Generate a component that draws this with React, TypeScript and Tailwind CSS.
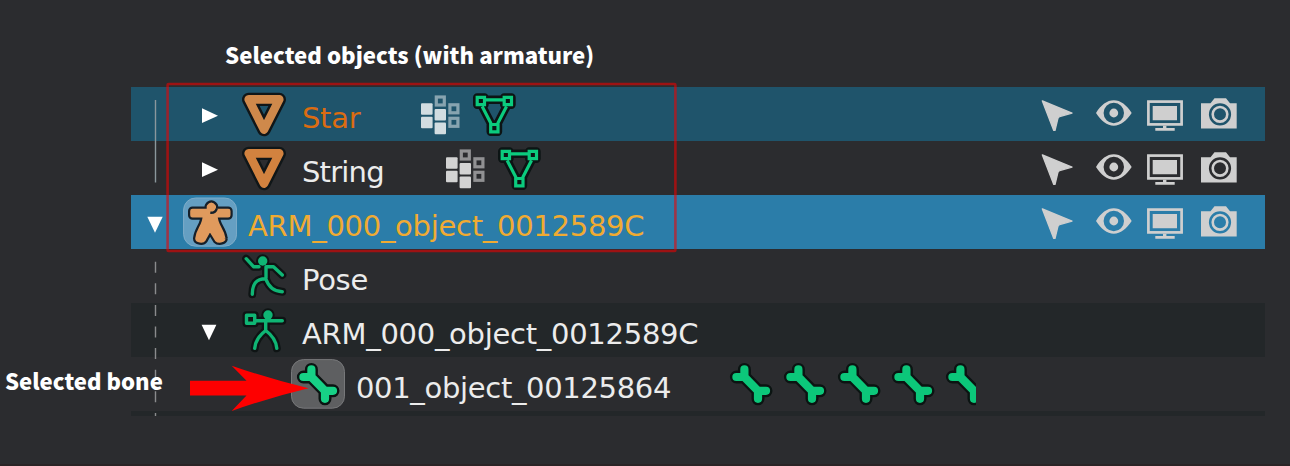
import type { ReactNode } from "react";

function Slot({ children, w = 54 }: { children?: ReactNode; w?: number }) {
  return (
    <svg className="block shrink-0" width={w} height={54} viewBox={`0 0 ${w} 54`} fill="none">
      {children}
    </svg>
  );
}

const ArrowRight = () => (
  <Slot><path d="M19 21.3 35 28.7 19 36z" fill="#fff" /></Slot>
);

const MeshIcon = ({ color }: { color: string }) => (
  <Slot>
    <path d="M11.7 12.4H42.3L27 42.6z" stroke="#101618" strokeWidth="13.4" strokeLinejoin="round" />
    <path d="M11.7 12.4H42.3L27 42.6z" stroke={color} strokeWidth="8.6" strokeLinejoin="round" />
  </Slot>
);

const GroupIcon = ({ solid, faint }: { solid: string; faint: string }) => (
  <Slot>
    <g fill={solid}>
      <rect x="8" y="16.2" width="11.6" height="11.6" rx="1" />
      <rect x="8" y="29.7" width="11.6" height="11.6" rx="1" />
      <rect x="21.6" y="22" width="11.4" height="11.6" rx="1" />
      <rect x="21.6" y="35.6" width="11.4" height="11.6" rx="1" />
    </g>
    <g stroke={faint} strokeWidth="3.2">
      <rect x="23.3" y="10" width="8" height="8" />
      <rect x="36.9" y="17.8" width="8" height="8" />
      <rect x="36.9" y="31.3" width="8" height="8" />
    </g>
  </Slot>
);

const dataShape = "M19 12.8H36M15.2 19.5 24 36.5M39.5 19.5 30.7 36.5M10.2 10.4h7.3v7.3h-7.3zM37.2 10.4h7.3v7.3h-7.3zM23.7 37.5h7.3v7.3h-7.3z";
const MeshDataIcon = () => (
  <Slot>
    <path d={dataShape} stroke="#0c1414" strokeWidth="8.4" strokeLinejoin="round" />
    <path d={dataShape} stroke="#0bcb7e" strokeWidth="3.2" />
  </Slot>
);

const personShape = "M9.5 16V20.2H22C22 31 15.5 34 14.5 43.5 14.5 45.5 19.5 46 20.5 44.5L26.9 33 34 44.5C35.5 46 40.5 45.5 40.2 43.5 39 34 32.3 31 32.3 20.2H45.2V16H30.7V11.5Q28.3 8.2 26 11.5V16z";
const PersonIcon = () => (
  <Slot>
    <rect x=".6" y="3" width="53" height="48.2" rx="12" fill="#659fc2" stroke="#7fadc9" />
    <path d={personShape} stroke="#16202a" strokeWidth="9" strokeLinejoin="round" />
    <path d={personShape} fill="#e09a5d" stroke="#e09a5d" strokeWidth="4.6" strokeLinejoin="round" />
    <path d="M33.8 13.5C33 16.6 30.5 18 27.3 17.8" stroke="#16202a" strokeWidth="2.4" />
  </Slot>
);

const Figure = ({ d, cx }: { d: string; cx: number }) => (
  <Slot>
    <g stroke="#0e1414" strokeWidth="8" strokeLinecap="round" strokeLinejoin="round">
      <path d={d} /><circle cx={cx} cy="12" r="2.7" />
    </g>
    <path d={d} stroke="#0fb574" strokeWidth="3.4" strokeLinecap="round" strokeLinejoin="round" />
    <circle cx={cx} cy="12" r="4.7" fill="#0fb574" />
  </Slot>
);

const boneShape = "M20.4 12.4V20H12.4M20.4 20 34 33.8M42 33.8H34V41.8";
const BoneIcon = ({ active, w }: { active?: boolean; w?: number }) => (
  <Slot w={w}>
    {active && <rect x=".5" y="2.6" width="53" height="48.6" rx="12" fill="#5e5f61" stroke="#77787a" />}
    <path d={boneShape} stroke="#0b1412" strokeWidth="13" strokeLinecap="round" strokeLinejoin="round" />
    <path d={boneShape} stroke={active ? "#17d186" : "#0cc77a"} strokeWidth="8.2" strokeLinecap="round" strokeLinejoin="round" />
  </Slot>
);

const Toggles = () => (
  <div className="ml-auto mr-[19px] flex text-[#cfcfcf]">
    <Slot><path d="M12.4 14 42 26.1 29.6 29.6Q28 30 27.6 32.5L25 43.4H23.8z" fill="currentColor" stroke="currentColor" strokeWidth="1.4" strokeLinejoin="round" /></Slot>
    <Slot>
      <path fillRule="evenodd" d="M12 26C17 18 23 13.3 29.8 13.3S42.5 18 47.7 26C42.5 34 36.5 38.7 29.8 38.7S17 34 12 26zM29.8 15.8a10.2 10.2 0 1 0 0 20.4 10.2 10.2 0 0 0 0-20.4z" fill="currentColor" />
      <circle cx="29.8" cy="26" r="4.4" fill="currentColor" />
    </Slot>
    <Slot>
      <rect x="10.4" y="14.6" width="33.2" height="22.8" stroke="currentColor" strokeWidth="2.7" />
      <path d="M14.7 19H39V33.2H14.7zM25 38.7h3.4v2.2h8.3v2.8H17.3v-2.8H25z" fill="currentColor" />
    </Slot>
    <Slot>
      <path fillRule="evenodd" d="M9 16.2H18.5L22.5 11.2H34L38 16.2H44.7V41.6H9zM28 16.2a11.1 11.1 0 1 0 0 22.2 11.1 11.1 0 0 0 0-22.2z" fill="currentColor" />
      <circle cx="28" cy="27.3" r="7.3" stroke="currentColor" strokeWidth="2.6" />
    </Slot>
  </div>
);

const label = "shrink-0 whitespace-nowrap pl-[11px] pt-[8px] text-[29px] leading-[46px]";

export default function App() {
  return (
    <div className="relative h-[466px] w-[1290px] overflow-hidden border-b-2 border-[#2a2426] bg-[#2b2c2f] font-['DejaVu_Sans',sans-serif] text-[#ececec]">
      <div className="h-[87px] pl-[225px] pt-[37px] font-['Noto_Sans_CJK_SC',sans-serif] text-[22.2px] font-black leading-[34px] text-white">
        <span className="whitespace-nowrap">Selected objects (with armature)</span>
      </div>

      <div className="ml-[131px] w-[1134px]">
        <div className="flex h-[54px] bg-[#1f546b]">
          <Slot w={52} /><ArrowRight /><MeshIcon color="#cf894b" />
          <div className={`${label} w-[122px] tracking-[-0.3px] text-[#db6c12]`}>Star</div>
          <GroupIcon solid="#d2dde1" faint="#87a4b0" /><MeshDataIcon /><Toggles />
        </div>
        <div className="flex h-[54px]">
          <Slot w={52} /><ArrowRight /><MeshIcon color="#d2823f" />
          <div className={`${label} w-[147px] tracking-[-0.8px]`}>String</div>
          <GroupIcon solid="#d3d3d3" faint="#919193" /><MeshDataIcon /><Toggles />
        </div>
        <div className="flex h-[54px] bg-[#2b7da9]">
          <Slot w={52}><path d="M16.3 21.7H31.7L24 37.7z" fill="#fff" /></Slot>
          <PersonIcon />
          <div className={`${label} tracking-[-0.28px] text-[#f0ab32]`}>ARM_000_object_0012589C</div>
          <Toggles />
        </div>
        <div className="flex h-[54px]">
          <Slot w={106} />
          <Figure cx={25.7} d="M9.2 9.7 16.5 17.7H22M29 29V17.7H36.5L45.3 26M15.3 45.3C15.3 35 19 29.7 28.7 29.7 31.5 37.5 37 42.5 45.3 42.7" />
          <div className={`${label} tracking-[-0.3px]`}>Pose</div>
        </div>
        <div className="flex h-[54px] bg-[#232729]">
          <Slot w={52} />
          <Slot><path d="M18.6 21.7H33.4L26 37.3z" fill="#fff" /></Slot>
          <Figure cx={31} d="M9.5 12.2H17.7V20.2H9.5zM19 17.7H45.3M28.7 18V27.5M17.7 45.3C18.5 37 24 31 28.7 27.5 33.5 31 39 37 39.8 45.3" />
          <div className={`${label} tracking-[-0.28px]`}>ARM_000_object_0012589C</div>
        </div>
        <div className="flex h-[54px]">
          <Slot w={160} /><BoneIcon active />
          <div className={`${label} w-[379px] tracking-[-0.33px]`}>001_object_00125864</div>
          <BoneIcon /><BoneIcon /><BoneIcon /><BoneIcon /><BoneIcon w={36} />
        </div>
        <div className="h-[5px] bg-[#232729]" />
      </div>

      <svg className="absolute left-0 top-0" width="1290" height="466" fill="none">
        <path d="M155.5 100V182.5" stroke="#8b979c" strokeWidth="1.4" />
        <path d="M155.5 261.7V416" stroke="#8a8b8d" strokeWidth="1.4" strokeDasharray="11 10.6" />
        <rect x="167.6" y="84" width="507.8" height="167" rx="1" stroke="#f00000" strokeOpacity=".58" strokeWidth="2.6" />
        <path d="M190 380.7H246.5L231.7 365.7Q270 379 308.5 388.3 270 397.5 231.7 411L246.5 395.4H190z" fill="#fe0000" />
      </svg>
      <div className="absolute left-[5px] top-[363px] whitespace-nowrap font-['Noto_Sans_CJK_SC',sans-serif] text-[22.1px] font-black leading-[34px] text-white">Selected bone</div>
    </div>
  );
}
